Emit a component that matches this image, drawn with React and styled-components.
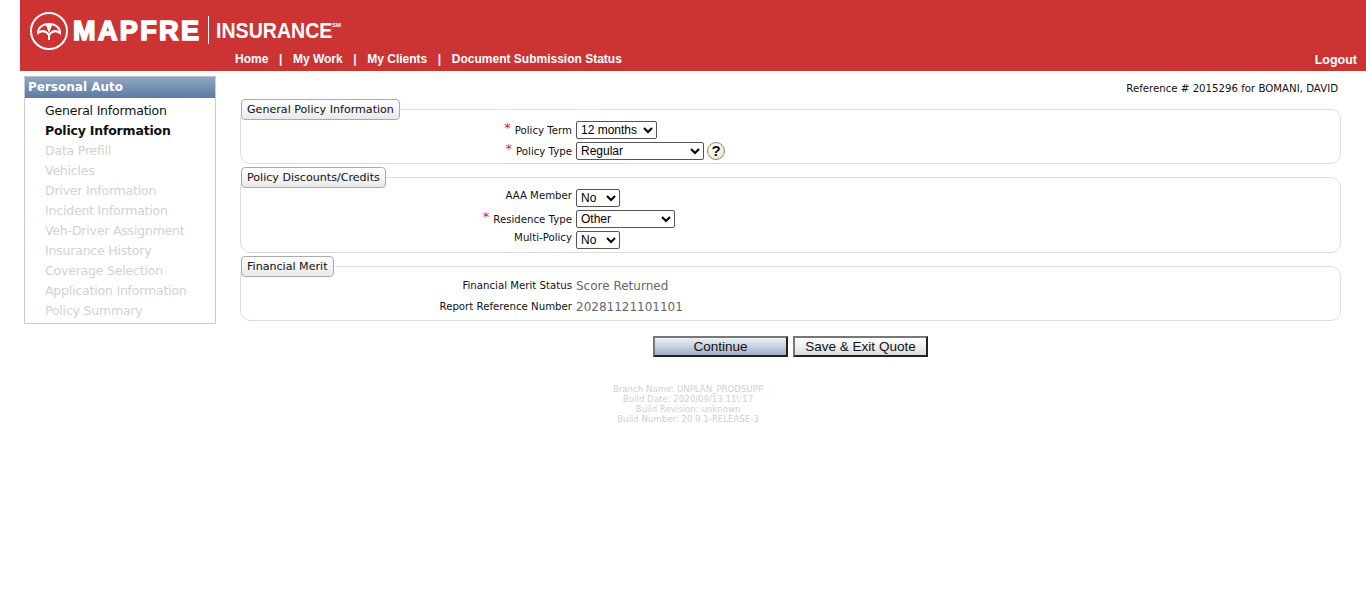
import React from 'react';
import styled, { createGlobalStyle } from 'styled-components';

const GlobalStyle = createGlobalStyle`
  html, body {
    margin: 0;
    padding: 0;
    background: #fff;
  }
  body {
    font-family: "DejaVu Sans", Verdana, sans-serif;
    color: #111;
  }
`;

const Page = styled.div`
  width: 1366px;
  min-height: 613px;
  overflow: hidden;
`;

const Header = styled.header`
  margin-left: 20px;
  height: 71px;
  background: #cc3333;
  display: flex;
  flex-direction: column;
  font-family: "Liberation Sans", Arial, sans-serif;
  color: #fff;
`;

const Logo = styled.div`
  height: 50px;
  padding: 12px 0 0 10px;
  box-sizing: border-box;
  display: flex;
  align-items: flex-start;
`;

const LogoName = styled.span`
  margin: 5px 0 0 5px;
  width: 127px;
  font-size: 27px;
  line-height: 28px;
  font-weight: 700;
  letter-spacing: 2.4px;
  -webkit-text-stroke: 1.7px #fff;
`;

const LogoRule = styled.span`
  width: 1px;
  height: 28px;
  margin: 4px 0 0 8px;
  background: #fff;
`;

const LogoSub = styled.span`
  margin: 7px 0 0 7px;
  width: 114px;
  font-size: 22px;
  line-height: 24px;
  font-weight: 700;
  white-space: nowrap;
  transform: scaleX(0.89);
  transform-origin: left center;
`;

const LogoMark = styled.sup`
  margin: 9px 0 0 2px;
  font-size: 6px;
  line-height: 8px;
  font-weight: 700;
`;

const NavBar = styled.nav`
  display: flex;
  align-items: center;
  height: 17px;
  padding: 0 9px 0 215px;
  font-size: 12px;
  font-weight: 700;
`;

const NavLink = styled.a`
  color: #fff;
  white-space: nowrap;
`;

const NavSep = styled.span`
  margin: 0 10.6px;
`;

const Logout = styled(NavLink)`
  margin-left: auto;
  font-size: 12.5px;
  margin-top: 2px;
`;

const Main = styled.main`
  display: flex;
  align-items: flex-start;
  padding: 5px 0 0 24px;
`;

const Sidebar = styled.aside`
  width: 190px;
  border: 1px solid #ccc;
  border-top-color: #b8c2d0;
  padding-bottom: 2px;
`;

const SideTitle = styled.div`
  height: 21px;
  line-height: 20px;
  padding-left: 3px;
  margin-bottom: 3px;
  background: linear-gradient(#90a6c3, #5c7aa3);
  color: #fff;
  font-size: 12px;
  font-weight: 700;
`;

const SideItem = styled.div`
  height: 20px;
  line-height: 20px;
  padding-left: 20px;
  font-size: 12.5px;
  letter-spacing: -0.2px;
  white-space: nowrap;
  font-weight: ${p => (p.$active ? 700 : 400)};
  color: ${p => (p.$disabled ? '#d2d2d2' : '#111')};
`;

const Content = styled.section`
  width: 1101px;
  margin-left: 24px;
`;

const RefLine = styled.div`
  height: 23px;
  line-height: 25px;
  padding-right: 3px;
  text-align: right;
  font-size: 10.2px;
`;

const Group = styled.fieldset`
  margin: 0 0 3px;
  padding: 0 0 1px;
  min-width: 0;
  border: 1px solid #ddd;
  border-radius: 10px;
`;

const GroupTitle = styled.legend`
  height: 21px;
  box-sizing: border-box;
  padding: 0 5px;
  line-height: 20px;
  font-size: 11.1px;
  color: #111;
  border: 1px solid #aaa;
  border-radius: 4px;
  background: linear-gradient(#fff, #e9e9e9);
`;

const Row = styled.div`
  display: grid;
  grid-template-columns: 331px 1fr;
  column-gap: 4px;
  align-items: start;
  height: 21px;
  box-sizing: border-box;
  padding-top: ${p => (p.$flush ? 0 : 1)}px;
  line-height: 18px;
`;

const Label = styled.label`
  text-align: right;
  font-size: 10.2px;
  white-space: nowrap;
  position: relative;
  top: ${p => p.$raise || 0}px;
`;

const Star = styled.span`
  color: #d22;
  font-size: 13px;
  margin-right: 4px;
  position: relative;
  top: -2px;
`;

const Field = styled.div`
  display: flex;
  align-items: flex-start;
  gap: 3px;
`;

const Select = styled.select`
  width: ${p => p.$w}px;
  height: 18px;
  box-sizing: border-box;
  padding: 0;
  background: #fff;
  color: #000;
  border: 1px solid #555;
  border-radius: 2px;
  font-family: "Liberation Sans", Arial, sans-serif;
  font-size: 12px;
`;

const Value = styled.span`
  font-size: 12px;
  color: #666;
`;

const Help = styled.span`
  width: 16px;
  height: 16px;
  border: 1px solid #8d8a70;
  border-radius: 50%;
  background: radial-gradient(circle at 40% 35%, #fff, #e6dfc0);
  color: #111;
  font-family: "Liberation Sans", Arial, sans-serif;
  font-size: 15px;
  font-weight: 700;
  line-height: 16px;
  text-align: center;
`;

const Actions = styled.div`
  display: flex;
  justify-content: center;
  gap: 5px;
  margin-top: 15px;
`;

const Button = styled.button`
  width: 135px;
  height: 21px;
  box-sizing: border-box;
  padding: 0;
  border: 2px solid;
  border-color: #777 #222 #222 #777;
  background: ${p => (p.$primary ? 'linear-gradient(#eef1f6, #9fafc8)' : 'linear-gradient(#fff, #ddd)')};
  color: #111;
  font-family: "Liberation Sans", Arial, sans-serif;
  font-size: 13.5px;
  line-height: 15px;
`;

const Footer = styled.footer`
  margin-top: 27px;
  padding-left: 10px;
  text-align: center;
  color: #cfcfcf;
  font-size: 8.6px;
  line-height: 10px;
`;

const steps = [
  'Data Prefill', 'Vehicles', 'Driver Information', 'Incident Information',
  'Veh-Driver Assignment', 'Insurance History', 'Coverage Selection',
  'Application Information', 'Policy Summary',
];

function UmbrellaLogo() {
  return (
    <svg width="38" height="38" viewBox="0 0 38 38" fill="none" stroke="#fff" strokeWidth="2">
      <circle cx="19" cy="19" r="18" />
      <path d="M8 21C8 15 13 12 19 12C25 12 30 15 30 21C26 18 22 19 19 23C16 19 12 18 8 21Z" />
      <path d="M16 13L22 13L19 21Z" fill="#fff" stroke="none" />
      <path d="M19 22V28" />
    </svg>
  );
}

export default function App() {
  return (
    <Page>
      <GlobalStyle />
      <Header>
        <Logo>
          <UmbrellaLogo />
          <LogoName>MAPFRE</LogoName>
          <LogoRule />
          <LogoSub>INSURANCE</LogoSub>
          <LogoMark>SM</LogoMark>
        </Logo>
        <NavBar>
          <NavLink>Home</NavLink>
          <NavSep>|</NavSep>
          <NavLink>My Work</NavLink>
          <NavSep>|</NavSep>
          <NavLink>My Clients</NavLink>
          <NavSep>|</NavSep>
          <NavLink>Document Submission Status</NavLink>
          <Logout>Logout</Logout>
        </NavBar>
      </Header>
      <Main>
        <Sidebar>
          <SideTitle>Personal Auto</SideTitle>
          <SideItem>General Information</SideItem>
          <SideItem $active>Policy Information</SideItem>
          {steps.map(s => <SideItem key={s} $disabled>{s}</SideItem>)}
        </Sidebar>
        <Content>
          <RefLine>Reference # 2015296 for BOMANI, DAVID</RefLine>
          <Group>
            <GroupTitle>General Policy Information</GroupTitle>
            <Row>
              <Label><Star>*</Star>Policy Term</Label>
              <Field>
                <Select $w={81}><option>12 months</option></Select>
              </Field>
            </Row>
            <Row>
              <Label><Star>*</Star>Policy Type</Label>
              <Field>
                <Select $w={128}><option>Regular</option></Select>
                <Help>?</Help>
              </Field>
            </Row>
          </Group>
          <Group>
            <GroupTitle>Policy Discounts/Credits</GroupTitle>
            <Row>
              <Label $raise={-2}>AAA Member</Label>
              <Field><Select $w={44}><option>No</option></Select></Field>
            </Row>
            <Row>
              <Label><Star>*</Star>Residence Type</Label>
              <Field><Select $w={99}><option>Other</option></Select></Field>
            </Row>
            <Row>
              <Label $raise={-2}>Multi-Policy</Label>
              <Field><Select $w={44}><option>No</option></Select></Field>
            </Row>
          </Group>
          <Group>
            <GroupTitle>Financial Merit</GroupTitle>
            <Row $flush>
              <Label>Financial Merit Status</Label>
              <Value>Score Returned</Value>
            </Row>
            <Row $flush>
              <Label>Report Reference Number</Label>
              <Value>20281121101101</Value>
            </Row>
          </Group>
          <Actions>
            <Button $primary>Continue</Button>
            <Button>Save &amp; Exit Quote</Button>
          </Actions>
        </Content>
      </Main>
      <Footer>
        <div>Branch Name: UNPLAN_PRODSUPP</div>
        <div>Build Date: 2020/09/13 11\:17</div>
        <div>Build Revision: unknown</div>
        <div>Build Number: 20.9.1-RELEASE-3</div>
      </Footer>
    </Page>
  );
}
